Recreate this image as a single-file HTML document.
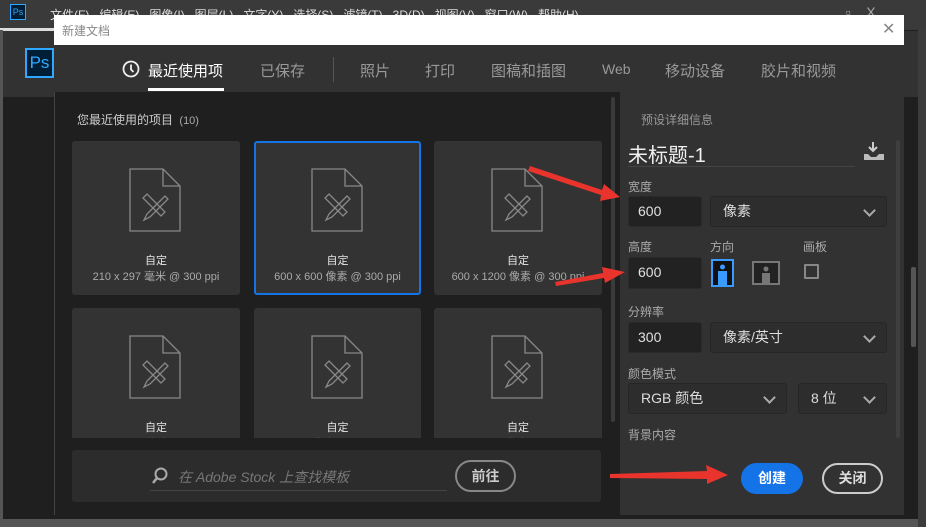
<!DOCTYPE html>
<html><head><meta charset="utf-8"><style>
*{margin:0;padding:0;box-sizing:border-box}
body{width:926px;height:527px;overflow:hidden;background:#1f1f1f;font-family:"Liberation Sans","Noto Sans CJK SC",sans-serif;position:relative}
.a{position:absolute}
.t{color:#bdbdbd;font-size:12px;white-space:nowrap}
.card{position:absolute;background:#333;border-radius:3px;overflow:hidden}
.card .n{position:absolute;width:100%;text-align:center;top:111px;font-size:11px;color:#e6e6e6}
.card .s{position:absolute;width:100%;text-align:center;top:127px;font-size:11px;color:#aaa}
.card svg{position:absolute;left:57px;top:27px}
.inp{position:absolute;background:#222;border:1px solid #2a2a2a;border-radius:3px;color:#e0e0e0;font-size:14px;padding-left:9px;line-height:29px}
.dd{position:absolute;background:#2d2d2d;border:1px solid #262626;border-radius:3px;color:#ddd;font-size:14px;padding-left:12px;line-height:29px}
.dd:after{content:"";position:absolute;right:12px;top:9px;width:7px;height:7px;border-right:2px solid #aaa;border-bottom:2px solid #aaa;transform:rotate(45deg)}
</style></head><body>
<div class="a" style="left:0;top:0;width:926px;height:30px;background:#3a3a3a"></div>
<div class="a" style="left:10px;top:4px;width:16px;height:16px;background:#001e36;border:1px solid #31a8ff;color:#31a8ff;font-size:9px;line-height:14px;text-align:center">Ps</div>
<div class="a t" style="left:50px;top:6px;color:#ddd;font-size:12px">文件(F) &nbsp; 编辑(E) &nbsp; 图像(I) &nbsp; 图层(L) &nbsp; 文字(Y) &nbsp; 选择(S) &nbsp; 滤镜(T) &nbsp; 3D(D) &nbsp; 视图(V) &nbsp; 窗口(W) &nbsp; 帮助(H)</div>
<div class="a t" style="left:820px;top:2px;color:#aaa;font-size:14px">▁ &nbsp; ▫ &nbsp;&nbsp; X</div>
<div class="a" style="left:0;top:28px;width:60px;height:3px;background:#ddd"></div>
<div class="a" style="left:0;top:31px;width:926px;height:66px;background:#323232"></div>
<div class="a" style="left:25px;top:48px;width:29px;height:30px;background:#001e36;border:2px solid #31a8ff;color:#31a8ff;font-size:17px;line-height:26px;text-align:center">Ps</div>
<div class="a" style="left:0;top:30px;width:3px;height:497px;background:#555"></div>
<div class="a" style="left:0;top:519px;width:926px;height:8px;background:#555"></div>
<div class="a" style="left:918px;top:30px;width:8px;height:497px;background:#3c3c3c"></div>
<!-- dialog -->
<div class="a" style="left:54px;top:15px;width:850px;height:500px;background:#1f1f1f;border-left:1px solid #444"></div>
<div class="a" style="left:54px;top:15px;width:850px;height:30px;background:#fff"></div>
<div class="a t" style="left:62px;top:22px;color:#888;font-size:12px">新建文档</div>
<div class="a t" style="left:882px;top:19px;color:#888;font-size:16px">✕</div>
<div class="a" style="left:54px;top:45px;width:850px;height:47px;background:#323232"></div>
<svg class="a" style="left:122px;top:60px" width="18" height="18"><circle cx="9" cy="9" r="7.5" fill="none" stroke="#eee" stroke-width="1.8"/><path d="M9 4.5V9.5L11.5 12" stroke="#eee" stroke-width="1.8" fill="none"/></svg>
<div class="a t" style="left:148px;top:60px;color:#fff;font-size:15px">最近使用项</div>
<div class="a" style="left:148px;top:88px;width:76px;height:3px;background:#fff"></div>
<div class="a t" style="left:260px;top:60px;color:#999;font-size:15px">已保存</div>
<div class="a" style="left:333px;top:57px;width:1px;height:25px;background:#555"></div>
<div class="a t" style="left:360px;top:60px;color:#999;font-size:15px">照片</div>
<div class="a t" style="left:425px;top:60px;color:#999;font-size:15px">打印</div>
<div class="a t" style="left:491px;top:60px;color:#999;font-size:15px">图稿和插图</div>
<div class="a t" style="left:602px;top:61px;color:#999;font-size:14px">Web</div>
<div class="a t" style="left:665px;top:60px;color:#999;font-size:15px">移动设备</div>
<div class="a t" style="left:761px;top:60px;color:#999;font-size:15px">胶片和视频</div>
<div class="a t" style="left:77px;top:111px;color:#ccc;font-size:12px">您最近使用的项目 <span style="font-size:11px;color:#aaa">&nbsp;(10)</span></div>
<!-- cards -->
<div style="position:absolute;left:0;top:0;width:603px;height:438px;overflow:hidden">
<div class="card" style="left:72px;top:141px;width:168px;height:154px"><svg width="52" height="64" viewBox="0 0 52 64"><path d="M1 1H34L51 18V63H1Z M34 1V18H51" fill="none" stroke="#888" stroke-width="1.3"/><path d="M14 30l18 18l4-4l-18-18z M36 28l-18 18l-3 6l6-3l18-18z" fill="none" stroke="#888" stroke-width="1.3"/></svg><div class="n">自定</div><div class="s">210 x 297 毫米 @ 300 ppi</div></div>
<div class="card" style="left:254px;top:141px;width:167px;height:154px;border:2px solid #1473e6"><svg style="left:55px;top:25px" width="52" height="64" viewBox="0 0 52 64"><path d="M1 1H34L51 18V63H1Z M34 1V18H51" fill="none" stroke="#888" stroke-width="1.3"/><path d="M14 30l18 18l4-4l-18-18z M36 28l-18 18l-3 6l6-3l18-18z" fill="none" stroke="#888" stroke-width="1.3"/></svg><div class="n" style="top:109px">自定</div><div class="s" style="top:125px">600 x 600 像素 @ 300 ppi</div></div>
<div class="card" style="left:434px;top:141px;width:168px;height:154px"><svg width="52" height="64" viewBox="0 0 52 64"><path d="M1 1H34L51 18V63H1Z M34 1V18H51" fill="none" stroke="#888" stroke-width="1.3"/><path d="M14 30l18 18l4-4l-18-18z M36 28l-18 18l-3 6l6-3l18-18z" fill="none" stroke="#888" stroke-width="1.3"/></svg><div class="n">自定</div><div class="s">600 x 1200 像素 @ 300 ppi</div></div>
<div class="card" style="left:72px;top:308px;width:168px;height:154px"><svg width="52" height="64" viewBox="0 0 52 64"><path d="M1 1H34L51 18V63H1Z M34 1V18H51" fill="none" stroke="#888" stroke-width="1.3"/><path d="M14 30l18 18l4-4l-18-18z M36 28l-18 18l-3 6l6-3l18-18z" fill="none" stroke="#888" stroke-width="1.3"/></svg><div class="n">自定</div><div class="s">300 x 1200 像素 @ 300 ppi</div></div>
<div class="card" style="left:254px;top:308px;width:167px;height:154px"><svg width="52" height="64" viewBox="0 0 52 64"><path d="M1 1H34L51 18V63H1Z M34 1V18H51" fill="none" stroke="#888" stroke-width="1.3"/><path d="M14 30l18 18l4-4l-18-18z M36 28l-18 18l-3 6l6-3l18-18z" fill="none" stroke="#888" stroke-width="1.3"/></svg><div class="n">自定</div><div class="s">5 x 5 像素 @ 300 ppi</div></div>
<div class="card" style="left:434px;top:308px;width:168px;height:154px"><svg width="52" height="64" viewBox="0 0 52 64"><path d="M1 1H34L51 18V63H1Z M34 1V18H51" fill="none" stroke="#888" stroke-width="1.3"/><path d="M14 30l18 18l4-4l-18-18z M36 28l-18 18l-3 6l6-3l18-18z" fill="none" stroke="#888" stroke-width="1.3"/></svg><div class="n">自定</div><div class="s">800 x 500 像素 @ 300 ppi</div></div>
</div>
<div class="a" style="left:611px;top:97px;width:4px;height:325px;background:#3a3a3a;border-radius:2px"></div>
<div class="a" style="left:72px;top:450px;width:529px;height:52px;background:#2c2c2c;border-radius:3px"></div>
<svg class="a" style="left:151px;top:467px" width="18" height="18"><circle cx="10" cy="7" r="5.5" fill="none" stroke="#aaa" stroke-width="2"/><path d="M6 11L2 16" stroke="#aaa" stroke-width="2.5"/></svg>
<div class="a t" style="left:178px;top:467px;color:#777;font-size:14px;font-style:italic">在 Adobe Stock 上查找模板</div>
<div class="a" style="left:150px;top:490px;width:297px;height:1px;background:#444"></div>
<div class="a" style="left:455px;top:460px;width:61px;height:32px;border:2px solid #888;border-radius:16px;color:#ccc;font-size:14px;font-weight:bold;text-align:center;line-height:28px">前往</div>
<!-- right panel -->
<div class="a" style="left:620px;top:92px;width:284px;height:423px;background:#323232"></div>
<div class="a t" style="left:641px;top:111px;color:#999;font-size:12px">预设详细信息</div>
<div class="a t" style="left:628px;top:139px;color:#f0f0f0;font-size:20px">未标题-1</div>
<div class="a" style="left:628px;top:166px;width:227px;height:1px;background:#444"></div>
<svg class="a" style="left:863px;top:142px" width="22" height="18"><path d="M10 0V8M6 5L10 9L14 5" stroke="#ccc" stroke-width="2" fill="none"/><path d="M1 12H5L8 15H13L16 12H21V18H1Z" fill="#bbb"/></svg>
<div class="a" style="left:896px;top:140px;width:4px;height:298px;background:#3e3e3e;border-radius:2px"></div>
<div class="a" style="left:911px;top:267px;width:5px;height:80px;background:#555;border-radius:2px"></div>
<div class="a t" style="left:628px;top:178px;color:#aaa;font-size:12px">宽度</div>
<div class="inp" style="left:628px;top:196px;width:74px;height:31px">600</div>
<div class="dd" style="left:710px;top:196px;width:177px;height:31px">像素</div>
<div class="a t" style="left:628px;top:238px;color:#aaa;font-size:12px">高度</div>
<div class="a t" style="left:710px;top:238px;color:#aaa;font-size:12px">方向</div>
<div class="a t" style="left:803px;top:238px;color:#aaa;font-size:12px">画板</div>
<div class="inp" style="left:628px;top:257px;width:74px;height:32px">600</div>
<svg class="a" style="left:711px;top:259px" width="23" height="28"><rect x="1" y="1" width="21" height="26" fill="#111" stroke="#3a9bff" stroke-width="2"/><circle cx="11.5" cy="8" r="2.5" fill="#3a9bff"/><path d="M7 12H16V27H7Z" fill="#3a9bff"/></svg>
<svg class="a" style="left:752px;top:261px" width="28" height="24"><rect x="1" y="1" width="26" height="22" fill="#222" stroke="#777" stroke-width="2"/><circle cx="14" cy="8" r="2.5" fill="#777"/><path d="M10 12H18V23H10Z" fill="#777"/></svg>
<div class="a" style="left:804px;top:264px;width:15px;height:15px;border:2px solid #888;border-radius:1px"></div>
<div class="a t" style="left:628px;top:303px;color:#aaa;font-size:12px">分辨率</div>
<div class="inp" style="left:628px;top:322px;width:74px;height:31px">300</div>
<div class="dd" style="left:710px;top:322px;width:177px;height:31px">像素/英寸</div>
<div class="a t" style="left:628px;top:365px;color:#aaa;font-size:12px">颜色模式</div>
<div class="dd" style="left:628px;top:383px;width:159px;height:31px">RGB 颜色</div>
<div class="dd" style="left:798px;top:383px;width:89px;height:31px">8 位</div>
<div class="a t" style="left:628px;top:426px;color:#aaa;font-size:12px">背景内容</div>
<div class="a" style="left:741px;top:463px;width:62px;height:31px;background:#1473e6;border-radius:16px;color:#fff;font-size:14px;font-weight:bold;text-align:center;line-height:31px">创建</div>
<div class="a" style="left:822px;top:463px;width:61px;height:31px;border:2px solid #ccc;border-radius:16px;color:#ddd;font-size:14px;font-weight:bold;text-align:center;line-height:27px">关闭</div>
<!-- arrows -->
<svg class="a" style="left:0;top:0" width="926" height="527"><g fill="#e8342c">
<path d="M530 166L602 190L604 184L620 197L600 201L601 195L528 171Z"/>
<path d="M555 282L603 273L602 267L625 272L605 283L604 278L556 286Z"/>
<path d="M610 474L707 471L706 465L728 475L707 484L707 479L610 478Z"/></g></svg>
</body></html>
